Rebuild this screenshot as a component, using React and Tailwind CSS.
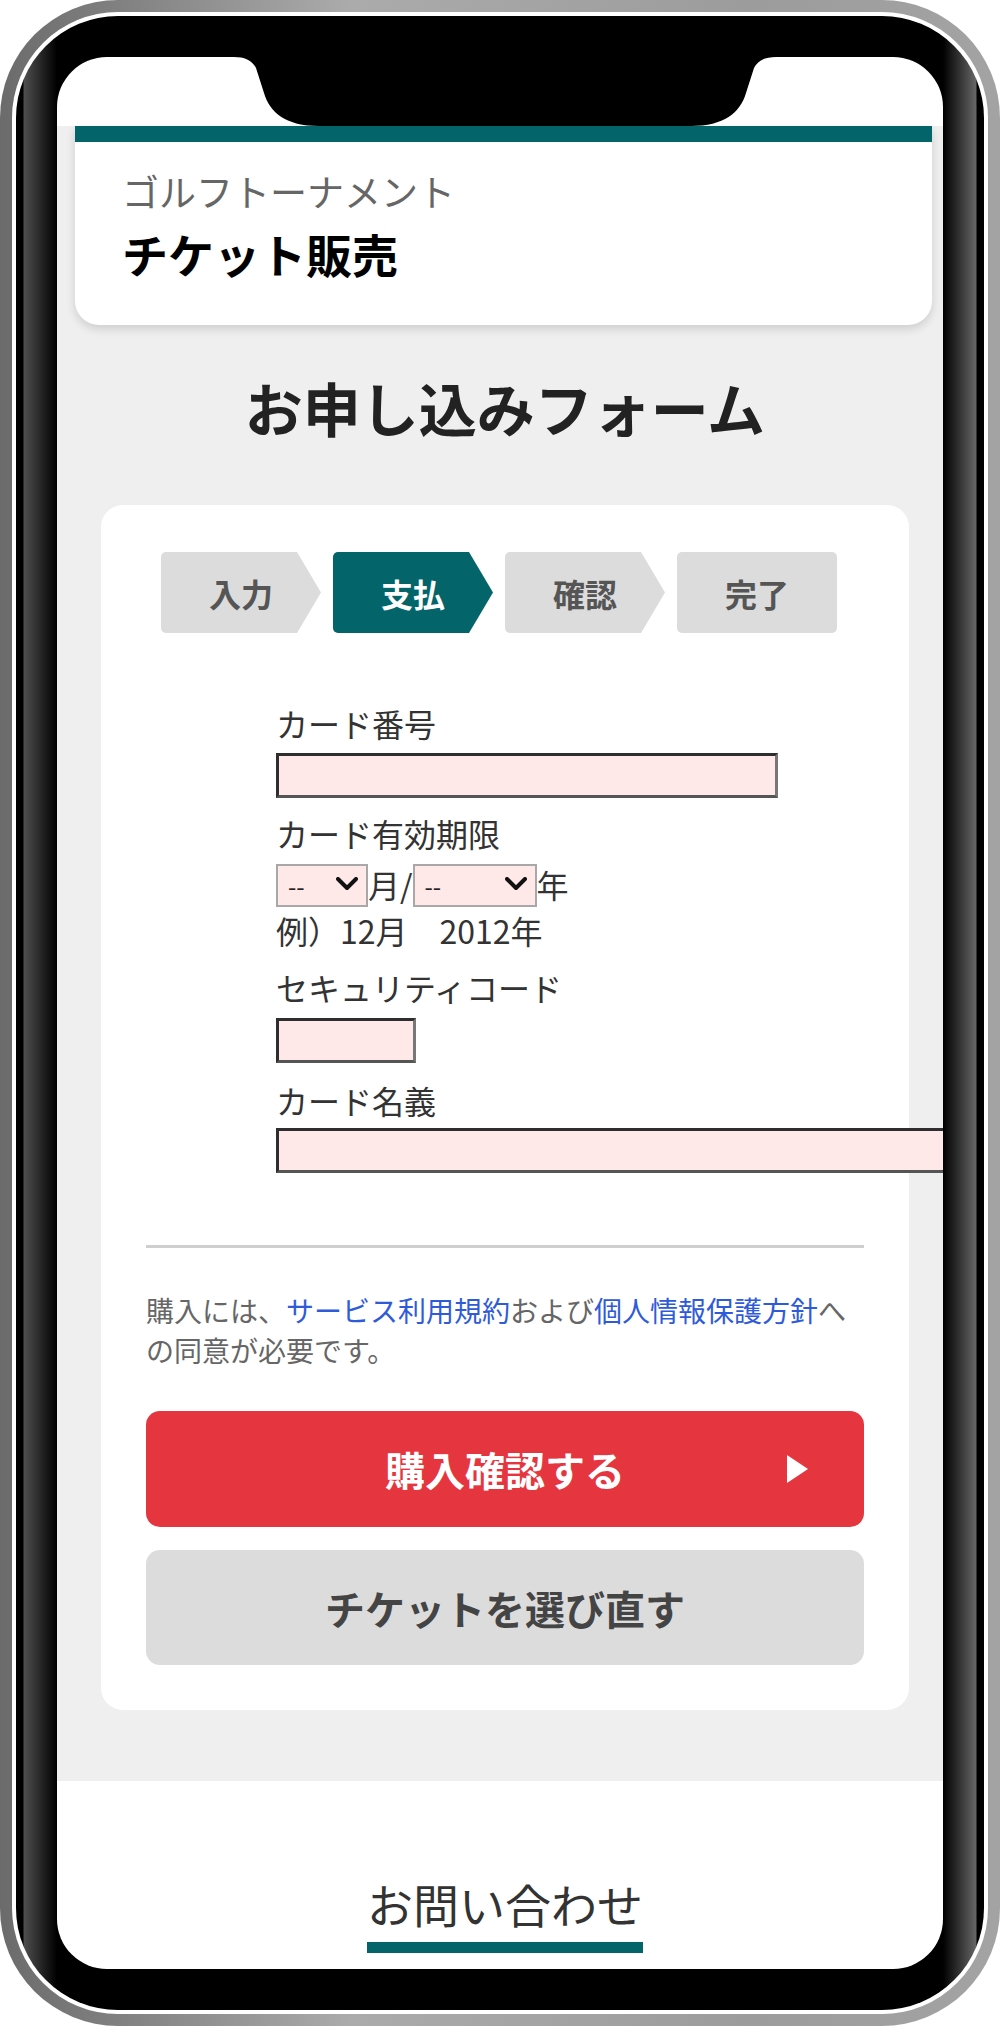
import { useState } from "react";

const TEAL = "bg-[#03646a]";

function Step({ label, active, last }) {
  const shape = last
    ? "rounded-[5px]"
    : "rounded-l-[5px] [clip-path:polygon(0_0,calc(100%_-_24px)_0,100%_50%,calc(100%_-_24px)_100%,0_100%)]";
  return (
    <div
      className={`w-[160px] h-[81px] flex items-center justify-center text-[32px] font-bold ${shape} ${
        active ? "bg-[#03646a] text-white" : "bg-[#dcdcdc] text-[#555]"
      }`}
    >
      {label}
    </div>
  );
}

function Chevron() {
  return (
    <svg width="22" height="14" viewBox="0 0 22 14" className="absolute right-[10px] top-1/2 -translate-y-1/2 pointer-events-none">
      <polyline points="2,2 11,11 20,2" fill="none" stroke="#111" strokeWidth="4" strokeLinecap="round" strokeLinejoin="round" />
    </svg>
  );
}

function Select({ width }) {
  return (
    <div className={`relative h-[43px] ${width}`}>
      <select className="appearance-none w-full h-full border-2 border-[#a8a8a8] bg-[#ffe8e8] pl-[10px] text-[24px] text-[#222] outline-none">
        <option>--</option>
      </select>
      <Chevron />
    </div>
  );
}

const inputCls =
  "block h-[45px] bg-[#ffe8e8] border-[3px] border-t-[#2e2e2e] border-l-[#2e2e2e] border-r-[#777] border-b-[#555] outline-none";

export default function App() {
  const [card, setCard] = useState("");
  const [cvc, setCvc] = useState("");
  const [name, setName] = useState("");

  return (
    <div className="w-[1000px] h-[2026px] bg-white font-['Noto_Sans_CJK_JP','Noto_Sans',sans-serif]">
      {/* phone frame */}
      <div className="w-[1000px] h-[2026px] rounded-[118px] p-[12px] bg-[linear-gradient(to_right,#6b6b6b,#ababab_35%,#9c9c9c_75%,#a3a3a3)]">
        <div className="h-full rounded-[106px] bg-white p-[4px]">
          <div className="h-full rounded-[102px] p-[41px] bg-[linear-gradient(to_right,#000_0px,#000_7px,#4e4e4e_8px,#000_41px,#000_calc(100%_-_41px),#666_calc(100%_-_8px),#000_calc(100%_-_7px))]">
            <div className="relative h-full rounded-[50px] overflow-hidden bg-white">
              {/* notch */}
              <svg width="542" height="70" viewBox="0 0 542 70" className="absolute top-0 left-[177px]">
                <path
                  d="M0,0 C10,0 18,3 22,11 L30,36 C36,56 52,69 85,69 L457,69 C490,69 506,56 512,36 L520,11 C524,3 532,0 542,0 Z"
                  fill="#000"
                />
              </svg>

              <div className="h-[69px]" />

              <div className="bg-[#efefef] pl-[10px] pb-[71px]">
                {/* header */}
                <div className="ml-[8px] mr-[11px] bg-white border-t-[16px] border-[#03646a] rounded-b-[24px] shadow-[0_4px_10px_rgba(0,0,0,0.14)] pt-[29px] pb-[44px] pl-[47px]">
                  <div className="text-[37px] leading-[40px] text-[#666]">ゴルフトーナメント</div>
                  <div className="mt-[14px] text-[46px] leading-[56px] font-bold text-black">チケット販売</div>
                </div>

                <h1 className="mt-[47px] text-center text-[58px] leading-[70px] font-bold text-[#222]">
                  お申し込みフォーム
                </h1>

                {/* form card */}
                <div className="mt-[63px] mx-[34px] bg-white rounded-[22px] pt-[47px] pb-[45px]">
                  <div className="flex gap-[12px] pl-[60px]">
                    <Step label="入力" />
                    <Step label="支払" active />
                    <Step label="確認" />
                    <Step label="完了" last />
                  </div>

                  <div className="pl-[175px] mt-[70px] text-[32px] leading-[40px] text-[#333]">
                    <div>カード番号</div>
                    <input className={`${inputCls} mt-[10px] w-[502px]`} value={card} onChange={(e) => setCard(e.target.value)} />

                    <div className="mt-[15px]">カード有効期限</div>
                    <div className="mt-[9px] flex items-center">
                      <Select width="w-[92px]" />
                      <span>月/</span>
                      <Select width="w-[124px]" />
                      <span>年</span>
                    </div>
                    <div className="mt-[5px]">例）12月　2012年</div>

                    <div className="mt-[17px]">セキュリティコード</div>
                    <input className={`${inputCls} mt-[11px] w-[140px]`} value={cvc} onChange={(e) => setCvc(e.target.value)} />

                    <div className="mt-[17px]">カード名義</div>
                    <input className={`${inputCls} mt-[8px] w-[720px]`} value={name} onChange={(e) => setName(e.target.value)} />
                  </div>

                  <div className="px-[45px]">
                    <div className="mt-[72px] h-[3px] bg-[#cfcfcf]" />

                    <p className="mt-[42px] text-[28px] leading-[40px] text-[#666]">
                      <span>購入には、</span>
                      <a className="text-[#2f5bd8]">サービス利用規約</a>
                      <span>および</span>
                      <a className="text-[#2f5bd8]">個人情報保護方針</a>
                      <span>へ</span>
                      <br />
                      <span>の同意が必要です。</span>
                    </p>

                    <button className="relative mt-[41px] w-full h-[116px] rounded-[14px] bg-[#e5363f] text-white text-[40px] font-bold">
                      購入確認する
                      <svg width="21" height="28" viewBox="0 0 21 28" className="absolute right-[56px] top-1/2 -translate-y-1/2">
                        <polygon points="0,0 21,14 0,28" fill="#fff" />
                      </svg>
                    </button>

                    <button className="mt-[23px] w-full h-[115px] rounded-[14px] bg-[#dcdcdc] text-[#444] text-[40px] font-bold">
                      チケットを選び直す
                    </button>
                  </div>
                </div>
              </div>

              {/* footer */}
              <div className="pl-[10px] pt-[94px] text-center">
                <div className="inline-flex flex-col">
                  <span className="text-[46px] leading-[56px] text-[#333]">お問い合わせ</span>
                  <span className={`mt-[11px] h-[11px] ${TEAL}`} />
                </div>
              </div>
            </div>
          </div>
        </div>
      </div>
    </div>
  );
}
